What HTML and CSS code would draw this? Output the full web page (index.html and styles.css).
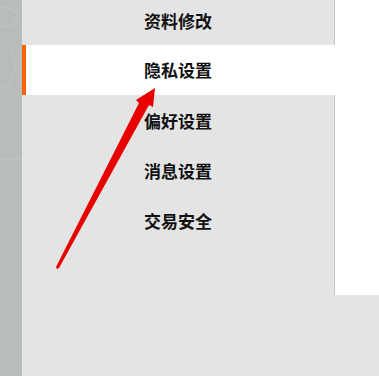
FILE: index.html
```html
<!DOCTYPE html>
<html lang="zh-CN">
<head>
<meta charset="utf-8">
<link rel="stylesheet" href="styles.css">
</head>
<body>
<div class="page">
  <aside class="strip">
    <div class="deco deco-a"></div>
    <div class="deco deco-b"></div>
    <div class="deco deco-c"></div>
  </aside>
  <main class="main">
    <section class="top">
      <nav class="menu">
        <div class="item">资料修改</div>
        <div class="item active">隐私设置</div>
        <div class="item">偏好设置</div>
        <div class="item">消息设置</div>
        <div class="item">交易安全</div>
      </nav>
      <div class="content"></div>
    </section>
    <section class="bottom"></section>
  </main>
  <svg class="arrow" width="379" height="376" viewBox="0 0 379 376">
    <polygon points="57,269 56,267 139,103 136,100 155,88 153,107 149,105 59,268" fill="#e80000"/>
  </svg>
</div>
</body>
</html>
```

FILE: styles.css
```css
* { box-sizing: border-box; }
html, body { margin: 0; padding: 0; }
body {
  width: 379px;
  height: 376px;
  overflow: hidden;
  background: #e4e4e4;
  font-family: "Noto Sans CJK SC", "Noto Sans", sans-serif;
}
.page {
  position: relative;
  display: flex;
  width: 379px;
  height: 376px;
}
.strip {
  position: relative;
  width: 22px;
  flex: none;
  background: #b9bcbc;
  overflow: hidden;
}
.deco {
  position: absolute;
  border: 2px solid #bfc1c1;
}
.deco-a { left: -14px; top: 6px; width: 32px; height: 22px; border-radius: 50%; }
.deco-b { left: -20px; top: 40px; width: 36px; height: 50px; border-radius: 50%; }
.deco-c { left: 0; top: 158px; width: 22px; height: 0; border-width: 2px 0 0 0; }
.main {
  flex: 1;
  display: flex;
  flex-direction: column;
}
.top {
  display: flex;
  height: 295px;
  flex: none;
}
.menu {
  width: 313px;
  flex: none;
  border-right: 1px solid #c2c2c2;
  background: #e4e4e4;
  margin-top: -5px;
  display: flex;
  flex-direction: column;
}
.item {
  height: 50px;
  line-height: 52px;
  padding-left: 122px;
  font-size: 17px;
  font-weight: 700;
  color: #111;
}
.item.active {
  background: #fff;
  margin-right: -1px;
  border-left: 4px solid #ff6200;
  padding-left: 118px;
  line-height: 50px;
}
.content {
  flex: 1;
  background: #fff;
}
.bottom {
  flex: 1;
  background: #e4e4e4;
}
.arrow {
  position: absolute;
  left: 0;
  top: 0;
  pointer-events: none;
}
```
